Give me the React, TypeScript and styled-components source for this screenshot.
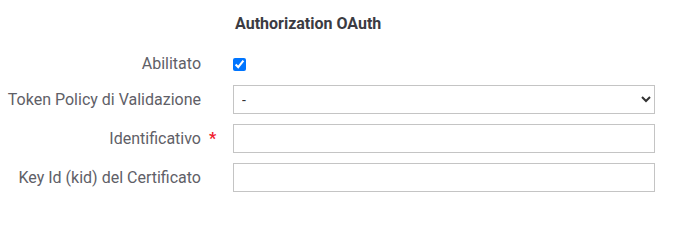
import styled, { createGlobalStyle } from "styled-components";

const GlobalStyle = createGlobalStyle`
  html, body {
    margin: 0;
    padding: 0;
    background: #ffffff;
  }
  body {
    font-family: Roboto, "Liberation Sans", Arial, sans-serif;
  }
`;

const Form = styled.div`
  display: grid;
  grid-template-columns: 201px 422px;
  column-gap: 32px;
  row-gap: 10px;
  align-items: center;
`;

const Title = styled.h3`
  grid-column: 2;
  margin: 0 0 8px 0;
  padding: 14px 0 0 2px;
  font-size: 16px;
  line-height: 20px;
  font-weight: 700;
  color: #3b3b42;
`;

const Label = styled.label<{ required?: boolean }>`
  grid-column: 1;
  position: relative;
  justify-self: end;
  white-space: nowrap;
  font-size: 16px;
  line-height: 20px;
  color: #606067;

  &::after {
    content: ${(p) => (p.required ? '"*"' : "none")};
    position: absolute;
    left: calc(100% + 8px);
    top: 0;
    color: #f0202e;
    font-weight: 700;
    font-size: 16px;
  }
`;

const CheckCell = styled.div`
  grid-column: 2;
  height: 23px;
  display: flex;
  align-items: center;
  padding-top: 2px;
  box-sizing: border-box;
`;

const Check = styled.input`
  width: 13px;
  height: 13px;
  margin: 0;
`;

const Field = styled.input`
  grid-column: 2;
  box-sizing: border-box;
  width: 100%;
  height: 29px;
  margin: 0;
  padding: 0 8px;
  border: 1px solid #c4c4c4;
  border-radius: 0;
  font-family: inherit;
  font-size: 14px;
  color: #333;
  background: #fff;
  outline: none;
`;

const Select = styled.select`
  grid-column: 2;
  box-sizing: border-box;
  width: 100%;
  height: 29px;
  margin: 0;
  padding: 0 4px;
  border: 1px solid #c4c4c4;
  border-radius: 0;
  font-family: inherit;
  font-size: 14px;
  color: #333;
  background: #fff;
  outline: none;
`;

export default function App() {
  return (
    <>
      <GlobalStyle />
      <Form>
        <Title>Authorization OAuth</Title>

        <Label htmlFor="abilitato">Abilitato</Label>
        <CheckCell>
          <Check id="abilitato" type="checkbox" defaultChecked />
        </CheckCell>

        <Label htmlFor="policy">Token Policy di Validazione</Label>
        <Select id="policy" defaultValue="-">
          <option value="-">-</option>
        </Select>

        <Label htmlFor="ident" required>
          Identificativo
        </Label>
        <Field id="ident" type="text" />

        <Label htmlFor="kid">Key Id (kid) del Certificato</Label>
        <Field id="kid" type="text" />
      </Form>
    </>
  );
}
